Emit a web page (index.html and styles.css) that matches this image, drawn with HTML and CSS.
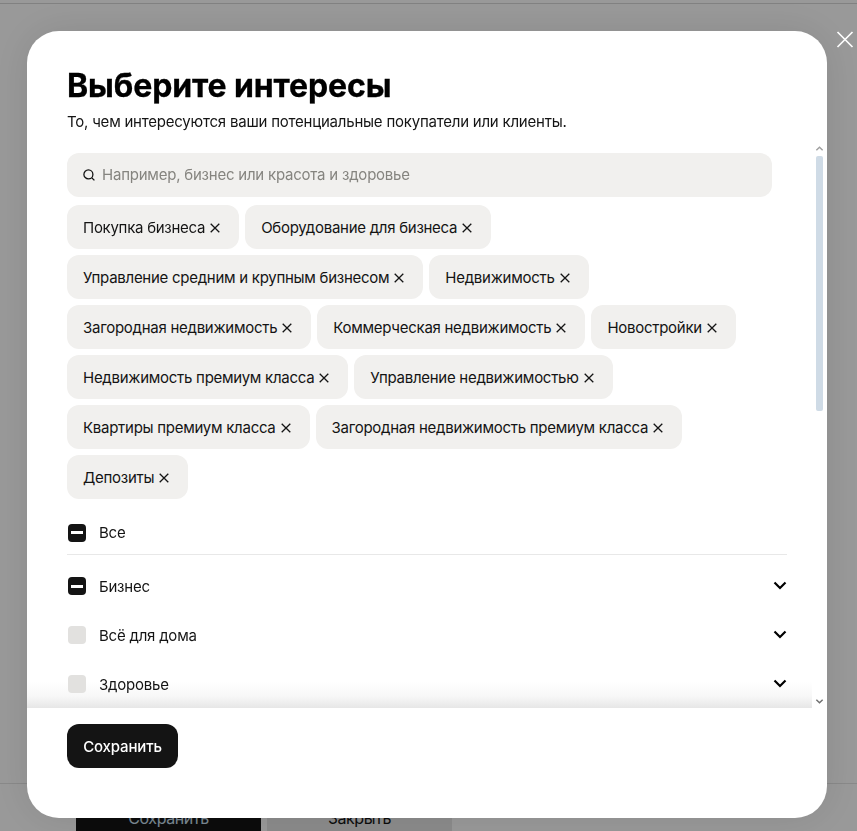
FILE: index.html
```html
<!DOCTYPE html>
<html lang="ru">

<head>
	<meta charset="utf-8">
	<title>Выберите интересы</title>
	<link rel="stylesheet" href="styles.css">
</head>

<body>
	<div class="page">
		<div class="page-top"></div>
		<div class="page-bottom">
			<button class="page-save">Сохранить</button>
			<button class="page-close">Закрыть</button>
		</div>
	</div>

	<div class="overlay"></div>

	<svg class="modal-close" width="18" height="18" viewBox="0 0 18 18">
		<path d="M1.5 1L16.5 16M16.5 1L1.5 16" stroke="#fff" stroke-width="1.7" fill="none" />
	</svg>

	<div class="modal">
		<div class="modal-head">
			<h1>Выберите интересы</h1>
			<p>То, чем интересуются ваши потенциальные покупатели или клиенты.</p>
		</div>

		<div class="modal-body">
			<div class="search">
				<svg width="14" height="14" viewBox="0 0 14 14">
					<circle cx="6.4" cy="6.4" r="4.5" stroke="#141414" stroke-width="1.3" fill="none" />
					<path d="M9.7 9.7L12.4 12.4" stroke="#141414" stroke-width="1.3" fill="none" />
				</svg>
				<span>Например, бизнес или красота и здоровье</span>
			</div>

			<div class="chips">
				<div class="chip">Покупка бизнеса <svg viewBox="0 0 10 10"><path d="M0.7 0.7L9.3 9.3M9.3 0.7L0.7 9.3" /></svg></div>
				<div class="chip">Оборудование для бизнеса <svg viewBox="0 0 10 10"><path d="M0.7 0.7L9.3 9.3M9.3 0.7L0.7 9.3" /></svg></div>
				<div class="chip">Управление средним и крупным бизнесом <svg viewBox="0 0 10 10"><path d="M0.7 0.7L9.3 9.3M9.3 0.7L0.7 9.3" /></svg></div>
				<div class="chip">Недвижимость <svg viewBox="0 0 10 10"><path d="M0.7 0.7L9.3 9.3M9.3 0.7L0.7 9.3" /></svg></div>
				<div class="chip">Загородная недвижимость <svg viewBox="0 0 10 10"><path d="M0.7 0.7L9.3 9.3M9.3 0.7L0.7 9.3" /></svg></div>
				<div class="chip">Коммерческая недвижимость <svg viewBox="0 0 10 10"><path d="M0.7 0.7L9.3 9.3M9.3 0.7L0.7 9.3" /></svg></div>
				<div class="chip">Новостройки <svg viewBox="0 0 10 10"><path d="M0.7 0.7L9.3 9.3M9.3 0.7L0.7 9.3" /></svg></div>
				<div class="chip">Недвижимость премиум класса <svg viewBox="0 0 10 10"><path d="M0.7 0.7L9.3 9.3M9.3 0.7L0.7 9.3" /></svg></div>
				<div class="chip">Управление недвижимостью <svg viewBox="0 0 10 10"><path d="M0.7 0.7L9.3 9.3M9.3 0.7L0.7 9.3" /></svg></div>
				<div class="chip">Квартиры премиум класса <svg viewBox="0 0 10 10"><path d="M0.7 0.7L9.3 9.3M9.3 0.7L0.7 9.3" /></svg></div>
				<div class="chip">Загородная недвижимость премиум класса <svg viewBox="0 0 10 10"><path d="M0.7 0.7L9.3 9.3M9.3 0.7L0.7 9.3" /></svg></div>
				<div class="chip">Депозиты <svg viewBox="0 0 10 10"><path d="M0.7 0.7L9.3 9.3M9.3 0.7L0.7 9.3" /></svg></div>
			</div>

			<div class="row row-all">
				<span class="check check-on"></span>
				<span class="row-label">Все</span>
			</div>

			<div class="groups">
				<div class="row">
					<span class="check check-on"></span>
					<span class="row-label">Бизнес</span>
					<svg class="arrow" viewBox="0 0 14 9"><path d="M1.5 1.5L7 7L12.5 1.5" /></svg>
				</div>
				<div class="row">
					<span class="check"></span>
					<span class="row-label">Всё для дома</span>
					<svg class="arrow" viewBox="0 0 14 9"><path d="M1.5 1.5L7 7L12.5 1.5" /></svg>
				</div>
				<div class="row">
					<span class="check"></span>
					<span class="row-label">Здоровье</span>
					<svg class="arrow" viewBox="0 0 14 9"><path d="M1.5 1.5L7 7L12.5 1.5" /></svg>
				</div>
			</div>

			<div class="fade"></div>
		</div>

		<div class="scrollbar">
			<svg viewBox="0 0 10 7"><path d="M1.5 5.5L5 2L8.5 5.5" /></svg>
			<div class="scroll-track"><div class="scroll-thumb"></div></div>
			<svg class="scroll-down" viewBox="0 0 10 7"><path d="M1.5 1.5L5 5L8.5 1.5" /></svg>
		</div>

		<div class="modal-foot">
			<button class="save">Сохранить</button>
		</div>
	</div>
</body>

</html>
```
FILE: styles.css
```css
* {
	box-sizing: border-box;
}

html, body {
	height: 100%;
}

body {
	margin: 0;
	overflow: hidden;
	font-family: Inter, "Noto Sans", sans-serif;
	font-size: 15px;
	letter-spacing: -0.22px;
	color: #141414;
	background-color: #fff;
}

.page {
	height: 831px;
	display: flex;
	flex-direction: column;
	justify-content: space-between;
	padding-top: 3px;
}

.page-top {
	height: 1px;
	background-color: #d8d8d8;
}

.page-bottom {
	height: 48px;
	border-top: 1px solid #e4e4e4;
	padding: 12px 0 0 76px;
	display: flex;
	gap: 6px;
}

.page-save, .page-close {
	width: 185px;
	height: 44px;
	border: none;
	font-family: inherit;
	font-size: 16px;
	letter-spacing: -0.4px;
}

.page-save {
	background-color: #141414;
	color: #cfe4f5;
}

.page-close {
	background-color: #e8e8e8;
	color: #141414;
}

.overlay {
	position: fixed;
	top: 0;
	left: 0;
	width: 100%;
	height: 100%;
	background-color: rgba(0, 0, 0, 0.4);
}

.modal-close {
	position: fixed;
	top: 31px;
	left: 836px;
}

.modal {
	position: fixed;
	top: 31px;
	left: 27px;
	width: 800px;
	height: 787px;
	background-color: #fff;
	border-radius: 32px;
	box-shadow: 0 0 40px rgba(0, 0, 0, 0.1);
	overflow: hidden;
	display: flex;
	flex-direction: column;
}

.modal-head {
	padding: 35px 40px 0;
	height: 113px;
}

h1 {
	margin: 0;
	font-size: 32px;
	line-height: 40px;
	font-weight: 700;
	letter-spacing: -0.1px;
	color: #000;
	-webkit-text-stroke: 0.3px #000;
}

.modal-head p {
	margin: 6px 0 0;
	line-height: 20px;
}

.modal-body {
	position: relative;
	width: 785px;
	height: 564px;
	padding: 9px 0 0 40px;
	overflow: hidden;
}

.search {
	width: 705px;
	height: 44px;
	background-color: #f1f0ee;
	border-radius: 12px;
	display: flex;
	align-items: center;
	gap: 6px;
	padding-left: 15px;
	color: #85847f;
}

.search span {
	padding-bottom: 1px;
}

.chips {
	display: flex;
	flex-wrap: wrap;
	gap: 6px;
	width: 720px;
	margin-top: 8px;
}

.chip {
	height: 44px;
	padding: 0 19px 0 16px;
	background-color: #f1f0ee;
	border-radius: 12px;
	display: flex;
	align-items: center;
	gap: 5px;
	white-space: nowrap;
	letter-spacing: -0.27px;
}

.chip svg {
	width: 10px;
	height: 10px;
	margin-top: 1px;
	fill: none;
	stroke: #141414;
	stroke-width: 1.3;
}

.row {
	position: relative;
	z-index: 1;
	display: flex;
	align-items: center;
	height: 24px;
	margin-bottom: 25px;
}

.row-all {
	width: 720px;
	margin: 22px 0 0;
	height: 34px;
	padding-bottom: 10px;
	border-bottom: 1px solid #e8e8e8;
}

.groups {
	width: 720px;
	margin-top: 19px;
}

.check {
	width: 18px;
	height: 18px;
	margin: 0 13px 0 1px;
	border-radius: 4px;
	background-color: #e2e1df;
	display: flex;
	align-items: center;
	justify-content: center;
}

.check-on {
	background-color: #141414;
}

.check-on::after {
	content: "";
	width: 12px;
	height: 3px;
	background-color: #fff;
}

.row-label {
	flex: 1;
}

.arrow {
	width: 14px;
	height: 9px;
	margin-top: -2px;
	fill: none;
	stroke: #000;
	stroke-width: 2.2;
}

.fade {
	position: absolute;
	left: 0;
	right: 0;
	bottom: 0;
	height: 26px;
	background: linear-gradient(rgba(230, 230, 230, 0), rgba(230, 230, 230, 0.3) 55%, #e6e6e6);
}

.scrollbar {
	position: absolute;
	top: 114px;
	left: 788px;
	width: 9px;
	height: 560px;
	display: flex;
	flex-direction: column;
	align-items: center;
}

.scrollbar svg {
	width: 9px;
	height: 7px;
	flex: none;
	fill: none;
	stroke: #a0a0a0;
	stroke-width: 1.6;
}

.scrollbar .scroll-down {
	stroke: #707070;
}

.scroll-track {
	flex: 1;
	width: 7px;
	margin-top: 4px;
}

.scroll-thumb {
	height: 255px;
	background-color: #cfdbe6;
	border-radius: 2px;
}

.modal-foot {
	padding: 16px 40px;
}

.save {
	height: 44px;
	width: 111px;
	padding: 0;
	border: none;
	border-radius: 12px;
	background-color: #141414;
	color: #fff;
	font-family: inherit;
	font-size: 15px;
	font-weight: 500;
	letter-spacing: -0.15px;
}
```
